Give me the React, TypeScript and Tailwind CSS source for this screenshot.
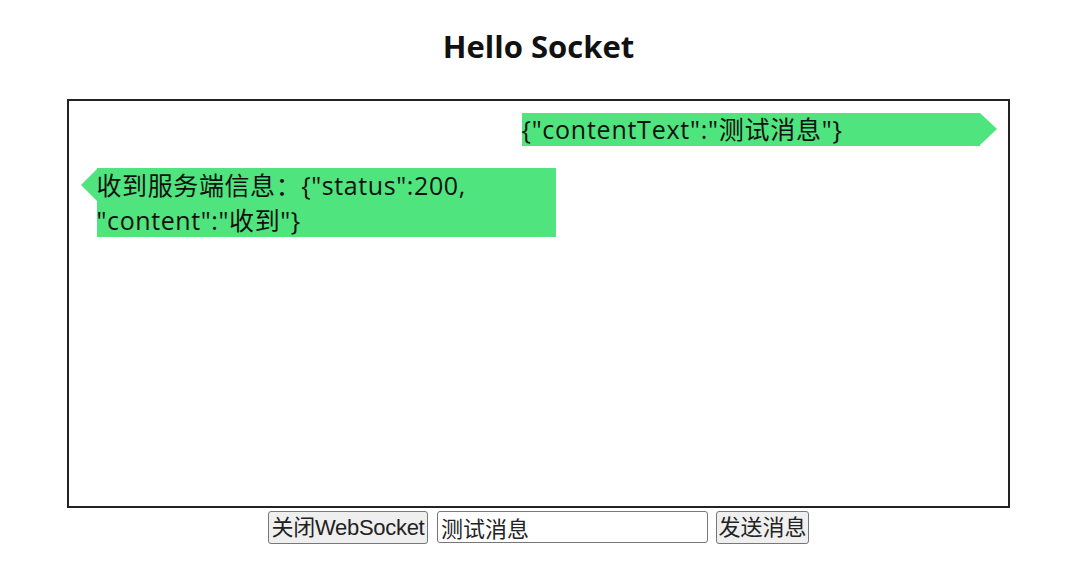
import React from "react";

export default function App() {
  const font = { fontFamily: '"Open Sans", "Noto Sans CJK SC", sans-serif' };
  return (
    <div className="min-h-screen bg-white pl-[6px] text-[#111]" style={font}>
      <h1 className="pt-[25px] text-center text-[31px] font-bold leading-[42px] text-[#111]">
        Hello Socket
      </h1>
      <div className="mx-auto mt-[32px] h-[409px] w-[943px] border-[2px] border-[#222]">
        <div className="flex justify-end pr-[11.5px] pt-[12px]">
          <div className="flex">
            <div className="h-[33px] w-[458px] whitespace-nowrap bg-[#4fe47d] text-[25px] leading-[33px] tracking-[0.75px]">
              {'{"contentText":"测试消息"}'}
            </div>
            <div className="h-0 w-0 border-y-[16.5px] border-l-[17px] border-y-transparent border-l-[#4fe47d]" />
          </div>
        </div>
        <div className="mt-[22px] flex pl-[11.5px]">
          <div className="mt-[1px] h-0 w-0 border-y-[16px] border-r-[16px] border-y-transparent border-r-[#4fe47d]" />
          <div className="w-[459px] whitespace-nowrap bg-[#4fe47d] text-[25px] leading-[34.5px] tracking-[0.6px]">
            {'收到服务端信息：{"status":200,'}
            <br />
            {'"content":"收到"}'}
          </div>
        </div>
      </div>
      <div
        className="mt-[3px] flex justify-center text-[22px] text-[#222]"
        style={{ fontFamily: '"Liberation Sans", "Noto Sans CJK SC", sans-serif' }}
      >
        <button className="h-[33px] w-[160px] whitespace-nowrap rounded-[3px] border border-[#777] bg-[#efefef] px-0 leading-[31px] tracking-[-0.3px]">
          关闭WebSocket
        </button>
        <input
          className="ml-[9px] h-[32px] w-[271px] rounded-[3px] border border-[#777] bg-white px-[3px] text-[22px] leading-[30px] text-[#222] outline-none"
          defaultValue="测试消息"
        />
        <button className="ml-[8px] h-[33px] w-[93px] whitespace-nowrap rounded-[3px] border border-[#777] bg-[#efefef] px-0 leading-[31px]">
          发送消息
        </button>
      </div>
    </div>
  );
}
